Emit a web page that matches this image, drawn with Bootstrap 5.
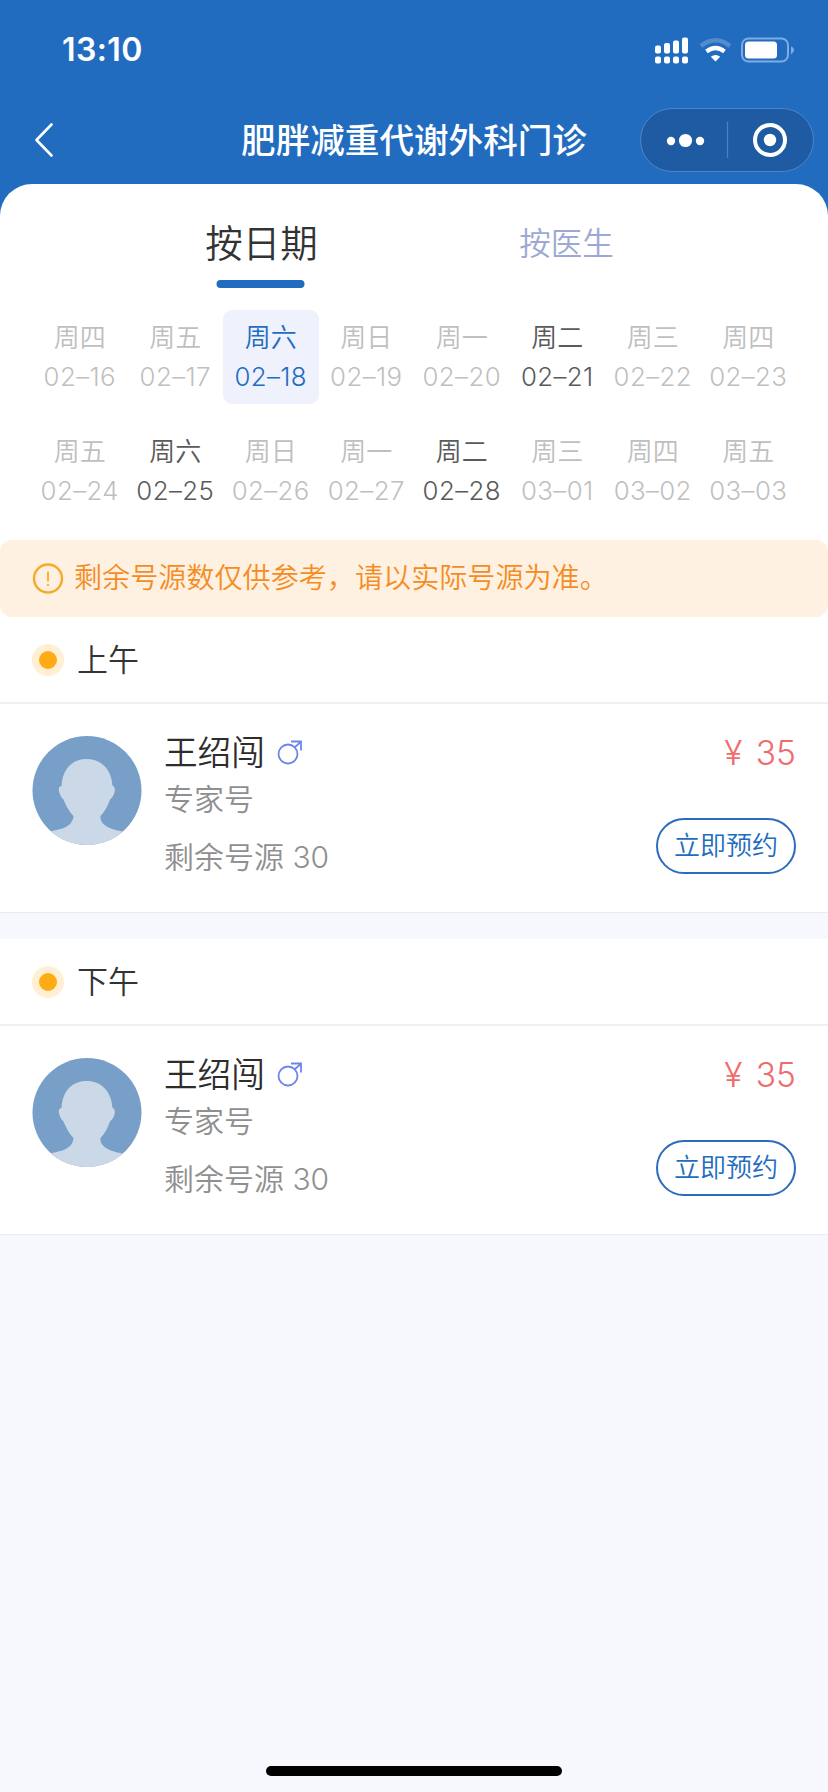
<!DOCTYPE html>
<html lang="zh-CN">
<head>
<meta charset="utf-8">
<meta name="viewport" content="width=device-width, initial-scale=1">
<title>肥胖减重代谢外科门诊</title>
<link href="https://cdn.jsdelivr.net/npm/bootstrap@5.3.0/dist/css/bootstrap.min.css" rel="stylesheet">
<style>
:root{--brand:#226cc0}
body{font-family:Inter,"Noto Sans CJK SC",sans-serif;font-weight:350;background:#f6f8fd;color:#333;min-height:1792px;line-height:1}
.topbar{background:var(--brand);height:224px;margin-bottom:-40px}
.statusbar{height:100px;padding:0 33px 0 62px}
.clock{font-size:32px;font-weight:600;letter-spacing:.4px}
.statusbar svg{margin-top:-1px}
.titlebar{height:80px;padding:0 14px 0 34px;display:grid;grid-template-columns:180px 1fr 200px;align-items:center}
.page-title{font-size:34.6px;font-weight:500;line-height:50px;white-space:nowrap}
.capsule{width:174px;height:64px;border:1px solid #4a86cb;background:#1e5ba3}
.sheet{background:#fff;border-radius:32px 32px 0 0;height:356px;padding:30px 32px 0}
.tabs-row{height:96px;padding:0 0 0 77px}
.tab-item{width:305px;font-size:31.5px;line-height:60px;color:#9da9d3;text-align:center;border:0;background:none;padding:0;font-weight:350}
.tab-item.active{color:#333;font-size:37.5px}
.tab-item.active::after{content:"";display:block;width:88px;height:8px;border-radius:4px;background:var(--brand);margin:6px auto 0;transform:translateX(-1.5px)}
.days{display:grid;grid-template-columns:repeat(8,1fr);row-gap:20px}
.day{height:94px;border-radius:9px;color:#bfbfbf;text-align:center;padding-top:8px}
.day .wk{font-size:26px;line-height:40px}
.day .dt{font-size:25.8px;line-height:37px;white-space:nowrap;letter-spacing:.4px}
.day.open{color:#5a5a5a}
.day.picked{color:var(--brand);background:#eff2fd}
.notice-wrap{background:#fff}
.notice{height:77px;border-radius:12px;background:#fef1e1;color:#f58c1f;font-size:28.1px;padding-left:32px}
.notice svg{margin-right:10px}
.session{background:#fff;margin-bottom:26px;border-bottom:1px solid #e9ebee}
.session-head{height:87px;border-bottom:2px solid #f0f0f1;padding-left:32px;font-size:31px;color:#333}
.session-head .pip{width:32px;height:32px;border-radius:50%;background:#fff0d3;margin-right:13px}
.session-head .pip i{width:18px;height:18px;border-radius:50%;background:#ffab16}
.doctor{height:208px;padding:31px 32px 0}
.doctor .face{margin-top:1px}
.info{padding-left:22px}
.doc-name{font-size:33.6px;line-height:36px;color:#2d2d2d}
.doc-name svg{margin:-3px 0 0 12px}
.doc-meta{font-size:30px;line-height:40px;color:#8f8f8f;margin-top:8px}
.left-count{margin-top:18px}
.fee{font-size:33.5px;line-height:36px;color:#ee6c6e;word-spacing:4px}
.book{width:140px;height:56px;margin-top:47px;border:2px solid #2c6bbd;color:var(--brand);font-size:26px;font-weight:350;line-height:1;padding:0}
.home-bar{width:296px;height:10px;border-radius:5px;background:#000;bottom:16px;left:266px}
</style>
</head>
<body class="position-relative">
<header class="topbar text-white">
  <div class="statusbar d-flex align-items-center justify-content-between">
    <span class="clock">13:10</span>
    <svg width="142" height="30" viewBox="0 0 142 30" fill="#fff">
      <g><rect x="2" y="10.500" width="6" height="8" rx="2"/><rect x="11" y="8" width="6" height="10.500" rx="2"/><rect x="20" y="5.500" width="6" height="13" rx="2"/><rect x="29" y="2.500" width="6" height="16" rx="2"/>
      <rect x="2" y="21.500" width="6" height="7" rx="2"/><rect x="11" y="21.500" width="6" height="7" rx="2"/><rect x="20" y="21.500" width="6" height="7" rx="2"/><rect x="29" y="21.500" width="6" height="7" rx="2"/></g>
      <g fill="none" stroke="#fff"><path d="M48 11Q62.500-.5 77 11" stroke-width="4.500" opacity=".22"/><path d="M53.500 16.500Q62.500 9.500 71.500 16.500" stroke-width="4.200"/></g>
      <path d="M57.800 21.800Q62.500 18 67.200 21.800L62.500 26.600Z"/>
      <rect x="89" y="3.500" width="46" height="23" rx="6.500" fill="none" stroke="#7facdf" stroke-width="2"/>
      <rect x="92" y="6.500" width="32" height="17" rx="3.500"/><path d="M138 11.500Q141 12.500 141 15T138 19.500Z" fill="#7facdf"/>
    </svg>
  </div>
  <div class="titlebar">
    <svg width="20" height="36" viewBox="0 0 20 36" fill="none" stroke="#fff" stroke-width="2.600" stroke-linecap="round" stroke-linejoin="round"><path d="M17.500 2.500L2.500 18L17.500 33.500"/></svg>
    <h1 class="page-title m-0 text-center">肥胖减重代谢外科门诊</h1>
    <div class="capsule rounded-pill ms-auto">
      <svg width="172" height="62" viewBox="0 0 172 62" fill="#fff" class="d-block"><circle cx="30" cy="32" r="4.200"/><circle cx="44.500" cy="31.500" r="6.600"/><circle cx="59" cy="32" r="4.200"/><path d="M86.500 12.500V49" stroke="#4a80c0" stroke-width="1.200"/><circle cx="129" cy="31" r="15" fill="none" stroke="#fff" stroke-width="4"/><circle cx="129" cy="31" r="6.200"/></svg>
    </div>
  </div>
</header>

<main>
  <section class="sheet">
    <div class="tabs-row d-flex align-items-start">
      <button class="tab-item active">按日期</button>
      <button class="tab-item">按医生</button>
    </div>
    <div class="days">
      <div class="day"><div class="wk">周四</div><div class="dt">02–16</div></div>
      <div class="day"><div class="wk">周五</div><div class="dt">02–17</div></div>
      <div class="day picked"><div class="wk">周六</div><div class="dt">02–18</div></div>
      <div class="day"><div class="wk">周日</div><div class="dt">02–19</div></div>
      <div class="day"><div class="wk">周一</div><div class="dt">02–20</div></div>
      <div class="day open"><div class="wk">周二</div><div class="dt">02–21</div></div>
      <div class="day"><div class="wk">周三</div><div class="dt">02–22</div></div>
      <div class="day"><div class="wk">周四</div><div class="dt">02–23</div></div>
      <div class="day"><div class="wk">周五</div><div class="dt">02–24</div></div>
      <div class="day open"><div class="wk">周六</div><div class="dt">02–25</div></div>
      <div class="day"><div class="wk">周日</div><div class="dt">02–26</div></div>
      <div class="day"><div class="wk">周一</div><div class="dt">02–27</div></div>
      <div class="day open"><div class="wk">周二</div><div class="dt">02–28</div></div>
      <div class="day"><div class="wk">周三</div><div class="dt">03–01</div></div>
      <div class="day"><div class="wk">周四</div><div class="dt">03–02</div></div>
      <div class="day"><div class="wk">周五</div><div class="dt">03–03</div></div>
    </div>
  </section>

  <div class="notice-wrap">
    <div class="notice d-flex align-items-center">
      <svg width="32" height="32" viewBox="0 0 32 32" fill="none" stroke="#f5ab28"><circle cx="16" cy="15.500" r="14" stroke-width="2.400"/><path d="M16 8.500V18.500" stroke-width="1.800"/><circle cx="16" cy="22" r=".8" stroke-width="1"/></svg>
      <span>剩余号源数仅供参考，请以实际号源为准。</span>
    </div>
  </div>

  <svg width="0" height="0" class="position-absolute">
    <clipPath id="disc"><circle cx="55" cy="54.500" r="54.500"/></clipPath>
    <symbol id="avatar" viewBox="0 0 110 110"><g clip-path="url(#disc)"><rect width="110" height="110" fill="#789fc8"/><path d="M54.500 23C69 23 79.500 33 80.500 50C83 50 83.500 54 82 58Q80.500 62 78 63.500C75 72 71.500 77 68.500 80C67.500 90 81 94 91 95.500L91 110H18V95.500C30 93 40.500 91 41.500 80C38.500 77 35 72 31.500 63.500Q28.500 61 27.500 57C26 53 27 50 29.500 50C30.500 32 41 23 54.500 23Z" fill="#cbd8e7"/></g></symbol>
    <symbol id="male" viewBox="0 0 26 26"><g fill="none" stroke="#6c85ee" stroke-width="1.800"><circle cx="11" cy="15" r="9.500"/><path d="M17.500 8.500L23.800 2.800M14 2.500H24V11.500"/></g></symbol>
  </svg>

  <section class="session">
    <div class="session-head d-flex align-items-center">
      <span class="pip d-flex align-items-center justify-content-center"><i></i></span><span>上午</span>
    </div>
    <div class="doctor d-flex">
      <svg class="face" width="110" height="110"><use href="#avatar"/></svg>
      <div class="info flex-grow-1">
        <div class="doc-name d-flex align-items-center">王绍闯<svg width="26" height="26"><use href="#male"/></svg></div>
        <div class="doc-meta">专家号</div>
        <div class="doc-meta left-count">剩余号源 30</div>
      </div>
      <div class="d-flex flex-column align-items-end">
        <div class="fee">¥ 35</div>
        <button class="book btn rounded-pill">立即预约</button>
      </div>
    </div>
  </section>

  <section class="session">
    <div class="session-head d-flex align-items-center">
      <span class="pip d-flex align-items-center justify-content-center"><i></i></span><span>下午</span>
    </div>
    <div class="doctor d-flex">
      <svg class="face" width="110" height="110"><use href="#avatar"/></svg>
      <div class="info flex-grow-1">
        <div class="doc-name d-flex align-items-center">王绍闯<svg width="26" height="26"><use href="#male"/></svg></div>
        <div class="doc-meta">专家号</div>
        <div class="doc-meta left-count">剩余号源 30</div>
      </div>
      <div class="d-flex flex-column align-items-end">
        <div class="fee">¥ 35</div>
        <button class="book btn rounded-pill">立即预约</button>
      </div>
    </div>
  </section>
</main>
<div class="home-bar position-absolute"></div>
<script src="https://cdn.jsdelivr.net/npm/bootstrap@5.3.0/dist/js/bootstrap.bundle.min.js"></script>
</body>
</html>
